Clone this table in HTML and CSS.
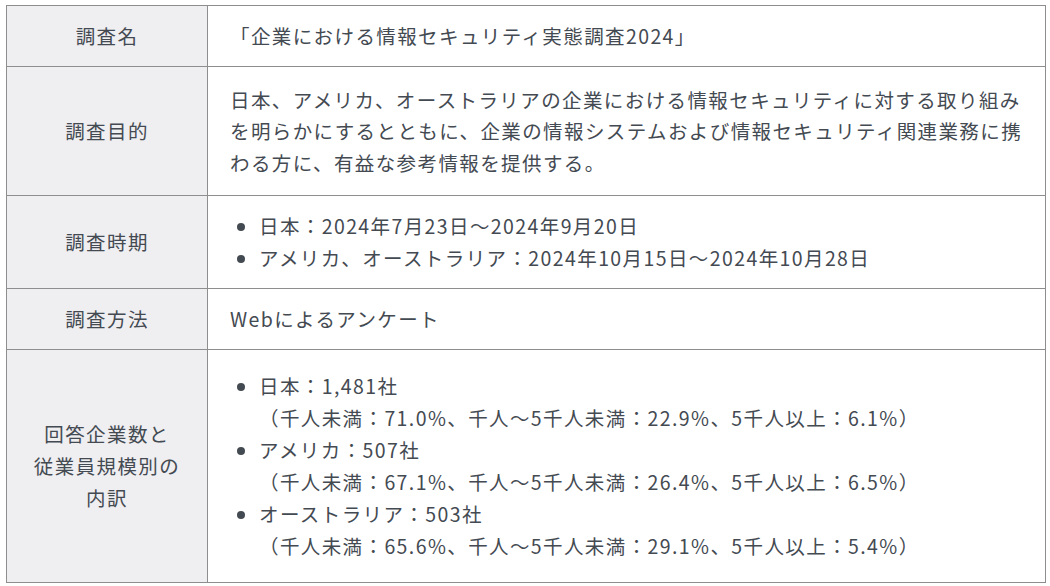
FILE: index.html
```html
<!DOCTYPE html>
<html lang="ja">
<head>
<meta charset="utf-8">
<link rel="stylesheet" href="styles.css">
</head>
<body>
<div class="wrap">
<table class="info">
  <tr>
    <th>調査名</th>
    <td>「企業における情報セキュリティ実態調査2024」</td>
  </tr>
  <tr class="r-purpose">
    <th>調査目的</th>
    <td>日本、アメリカ、オーストラリアの企業における情報セキュリティに対する取り組みを明らかにするとともに、企業の情報システムおよび情報セキュリティ関連業務に携わる方に、有益な参考情報を提供する。</td>
  </tr>
  <tr>
    <th>調査時期</th>
    <td>
      <ul class="list">
        <li>日本：2024年7月23日～2024年9月20日</li>
        <li>アメリカ、オーストラリア：2024年10月15日～2024年10月28日</li>
      </ul>
    </td>
  </tr>
  <tr>
    <th>調査方法</th>
    <td>Webによるアンケート</td>
  </tr>
  <tr class="r-count">
    <th>回答企業数と<br>従業員規模別の<br>内訳</th>
    <td>
      <ul class="list">
        <li>日本：1,481社<br>（千人未満：71.0%、千人～5千人未満：22.9%、5千人以上：6.1%）</li>
        <li>アメリカ：507社<br>（千人未満：67.1%、千人～5千人未満：26.4%、5千人以上：6.5%）</li>
        <li>オーストラリア：503社<br>（千人未満：65.6%、千人～5千人未満：29.1%、5千人以上：5.4%）</li>
      </ul>
    </td>
  </tr>
</table>
</div>
</body>
</html>
```

FILE: styles.css
```css
html, body {
  margin: 0;
  padding: 0;
  background: #ffffff;
}
.wrap {
  padding: 5px 4px 0 6px;
}
.info {
  width: 1040px;
  border-collapse: collapse;
  font-family: "Noto Sans CJK JP", "Noto Sans", sans-serif;
  font-size: 19.5px;
  letter-spacing: 1.4px;
  line-height: 32px;
  color: #444a52;
}
.info th,
.info td {
  border: 1px solid #8e8e8e;
  padding: 14px 22px;
  vertical-align: middle;
}
.info th {
  width: 156px;
  background: #efeef1;
  font-weight: normal;
  text-align: center;
}
.info td {
  text-align: left;
}
.r-purpose td {
  padding-top: 16.5px;
  padding-bottom: 16.5px;
  line-height: 31.5px;
}
.r-count td {
  padding-top: 20px;
  padding-bottom: 20px;
}
.list {
  margin: 0;
  padding: 0 0 0 29px;
}
.list li {
  list-style: disc;
}
```
